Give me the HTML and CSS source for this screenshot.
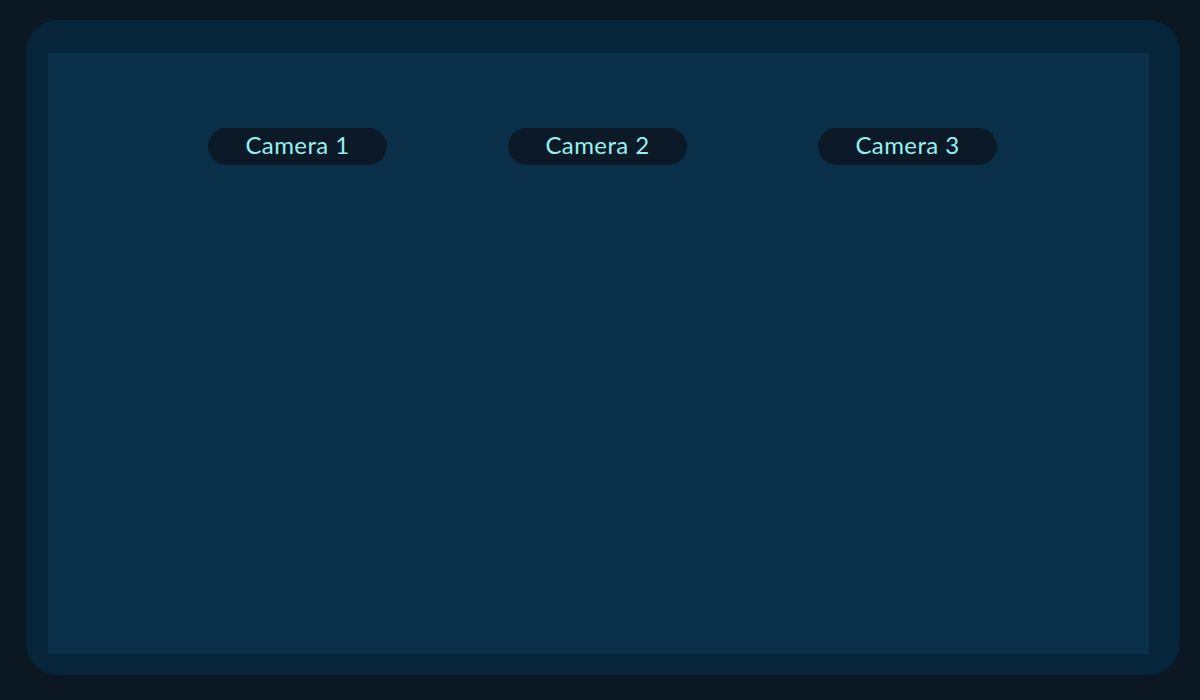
FILE: index.html
```html
<!DOCTYPE html>
<html>
<head>
<meta charset="utf-8">
<link rel="stylesheet" href="styles.css">
</head>
<body>
<div class="panel">
  <div class="stage">
    <div class="labels">
      <div class="pill pill-1">Camera 1</div>
      <div class="pill pill-2">Camera 2</div>
      <div class="pill pill-3">Camera 3</div>
    </div>
  </div>
</div>
</body>
</html>
```
FILE: styles.css
```css
html, body {
  margin: 0;
  padding: 0;
  background: #0b1822;
  width: 1200px;
  height: 700px;
  overflow: hidden;
}
body {
  padding: 20px 0 0 26px;
  box-sizing: border-box;
  font-family: Lato, "Liberation Sans", sans-serif;
}
.panel {
  width: 1154px;
  height: 655px;
  box-sizing: border-box;
  padding: 33px 31px 21px 22px;
  background: #06243a;
  border-radius: 32px;
}
.stage {
  width: 1101px;
  height: 601px;
  background: #0a2f49;
  padding-top: 75px;
  box-sizing: border-box;
}
.labels {
  display: flex;
  padding-left: 160px;
}
.pill {
  width: 179px;
  height: 37px;
  line-height: 34px;
  padding-bottom: 3px;
  box-sizing: border-box;
  border-radius: 19px;
  background: #0b1a26;
  color: #96f0f0;
  font-size: 24px;
  letter-spacing: 0.4px;
  text-align: center;
}
.pill-2 { margin-left: 121px; }
.pill-3 { margin-left: 131px; }
```
